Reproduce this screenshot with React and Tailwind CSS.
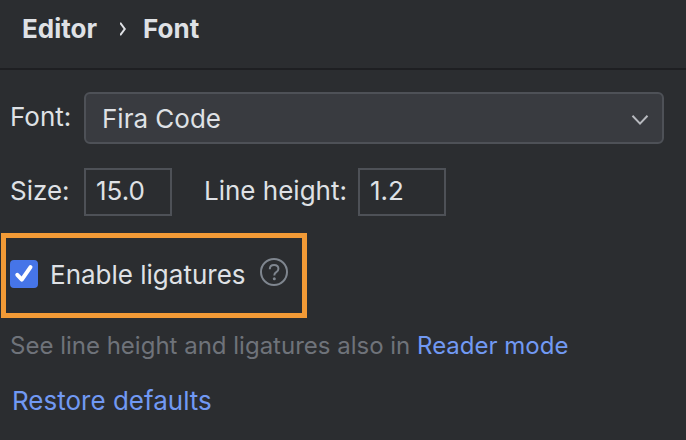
const FIELD = 'h-12 w-22 border-2 border-[#4e5157] bg-[#2b2d30] pb-1 pl-2.5 text-[26px] outline-none'
const LINK = 'text-[#7199f3] hover:underline'

function ChevronRight() {
  return (
    <svg viewBox="0 0 8 16" className="h-4 w-2 shrink-0" fill="#dfe1e5" aria-hidden="true">
      <path d="M1 1.4 L2.2 1.4 L7 8 L2.2 14.6 L1 14.6 L1 12.8 L4.6 8 L1 3.2 Z" />
    </svg>
  )
}

function ChevronDown() {
  return (
    <svg
      viewBox="0 0 18 12"
      className="pointer-events-none absolute top-[22px] right-[15px] h-3 w-[18px]"
      fill="none"
      stroke="#b8babf"
      strokeWidth="2"
      aria-hidden="true"
    >
      <path d="M1.5 1.8 L9 9.6 L16.5 1.8" />
    </svg>
  )
}

function HelpIcon() {
  return (
    <svg viewBox="0 0 28 28" className="size-7" fill="none" stroke="#7f868f" strokeWidth="2" aria-hidden="true">
      <circle cx="14" cy="14" r="13" />
      <path d="M9.8 11.2 C9.8 8.6 11.6 7 14.1 7 C16.7 7 18.4 8.6 18.4 10.8 C18.4 12.5 17.6 13.4 16.3 14.2 C14.8 15.1 14.3 15.8 14.3 17.5" />
      <circle cx="14.3" cy="20.7" r="1.5" fill="#7f868f" stroke="none" />
    </svg>
  )
}

export default function App() {
  return (
    <main className="min-h-screen bg-[#2b2d30] font-['Inter',sans-serif] text-[26px] leading-8 text-[#dfe1e5]">
      <nav className="flex h-[70px] items-start border-b-2 border-[#1e1f22] px-[22px] pt-[13px] font-bold">
        <span className="mr-[22px]">Editor</span>
        <span className="mr-4 flex h-8 items-center">
          <ChevronRight />
        </span>
        <span>Font</span>
      </nav>

      <form className="px-2.5 pt-[22px]">
        <div className="flex items-center pr-3">
          <label htmlFor="font" className="w-[74px] shrink-0 pb-0.5">Font:</label>
          <div className="relative grow">
            <select id="font" className="h-[52px] w-full appearance-none rounded-md border-2 border-[#4e5157] bg-[#393b40] px-4 pt-0.5">
              <option>Fira Code</option>
            </select>
            <ChevronDown />
          </div>
        </div>

        <div className="mt-6 flex items-center">
          <label htmlFor="size" className="w-[74px] shrink-0 pb-0.5">Size:</label>
          <input id="size" defaultValue="15.0" className={FIELD} />
          <label htmlFor="line-height" className="ml-8 mr-[11px] pb-0.5">Line height:</label>
          <input id="line-height" defaultValue="1.2" className={FIELD} />
        </div>

        <div className="mt-[17px] -ml-[9px] flex h-[85px] w-fit items-center border-5 border-[#f29a36] pr-3.5 pb-1 pl-1">
          <div className="grid size-7 place-items-center">
            <input
              id="ligatures"
              type="checkbox"
              defaultChecked
              className="peer col-start-1 row-start-1 size-7 appearance-none rounded-sm border-2 border-[#4e5157] checked:border-[#4675e8] checked:bg-[#4675e8]"
            />
            <svg
              viewBox="0 0 28 28"
              className="pointer-events-none col-start-1 row-start-1 hidden size-7 peer-checked:block"
              fill="none"
              stroke="#fff"
              strokeWidth="4"
              strokeLinecap="round"
              strokeLinejoin="round"
              aria-hidden="true"
            >
              <path d="M7.3 14.8 L11.8 19.6 L20.5 7.2" />
            </svg>
          </div>
          <label htmlFor="ligatures" className="ml-3 mr-3.5 pt-0.5">Enable ligatures</label>
          <button type="button" aria-label="Help" className="pb-1">
            <HelpIcon />
          </button>
        </div>

        <p className="mt-3 text-2xl text-[#6f737a]">
          See line height and ligatures also in <a href="#reader-mode" className={LINK}>Reader mode</a>
        </p>
        <button type="button" className={`mt-[23px] ml-0.5 ${LINK}`}>Restore defaults</button>
      </form>
    </main>
  )
}
